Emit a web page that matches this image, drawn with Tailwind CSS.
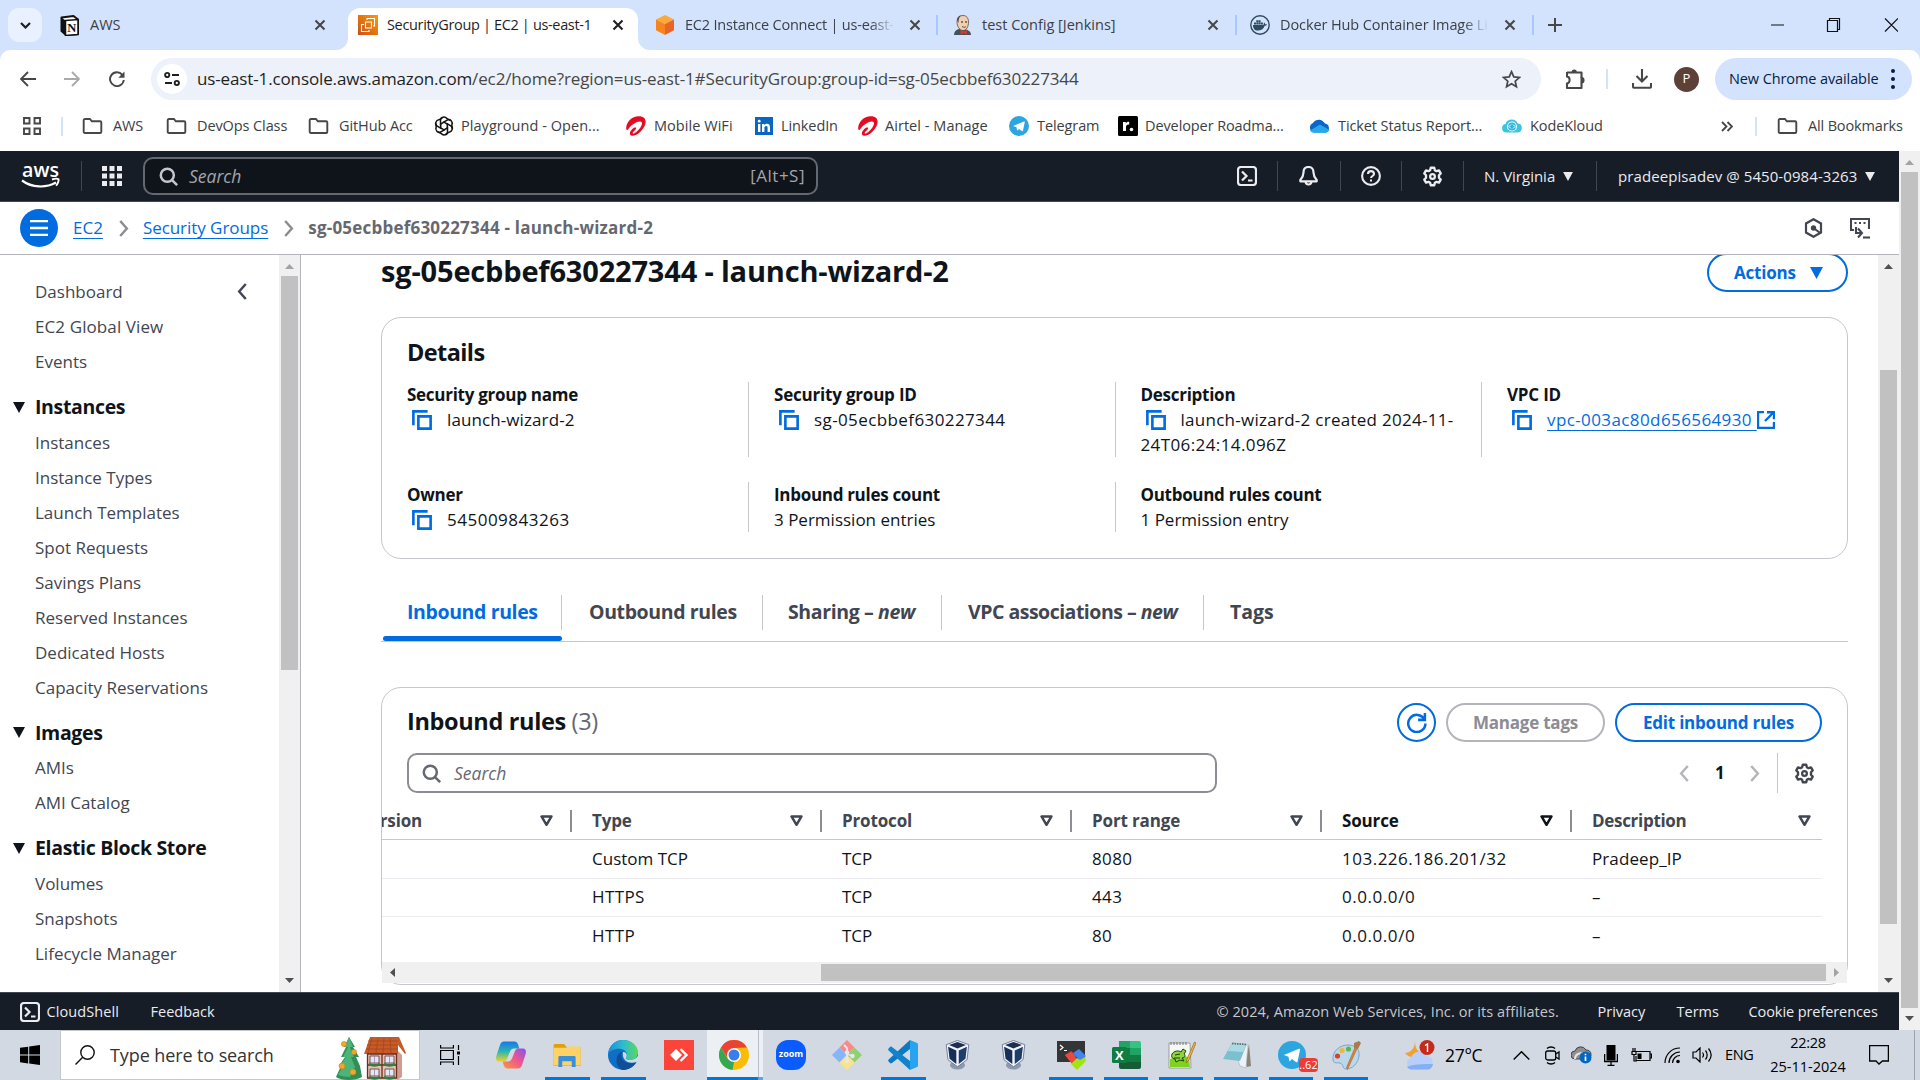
<!DOCTYPE html>
<html lang="en">
<head>
<meta charset="utf-8">
<title>SecurityGroup | EC2 | us-east-1</title>
<script src="https://cdn.jsdelivr.net/npm/@tailwindcss/browser@4"></script>
</head>
<body class="h-[1080px] w-[1920px] overflow-hidden bg-white font-['Open_Sans','Noto_Sans',sans-serif] text-[17px] text-[#0f141a]">

<!-- shared icons -->
<svg class="hidden">
  <symbol id="copy" viewBox="0 0 16 16"><path d="M14.900 5.100H5.100v9.800h9.800z M12.500 1.100H1.100v11" fill="none" stroke="currentColor" stroke-width="2.100"/></symbol>
  <symbol id="x" viewBox="0 0 12 12"><path d="M1.500 1.500l9 9M10.500 1.500l-9 9" stroke="currentColor" stroke-width="2.100"/></symbol>
  <symbol id="folder" viewBox="0 0 20 16"><path d="M1.200 2.300c0-.8.5-1.300 1.200-1.300h5l2 2.300h8.200c.7 0 1.200.5 1.200 1.200v9.200c0 .7-.5 1.300-1.200 1.300H2.400c-.7 0-1.200-.5-1.200-1.300z" fill="none" stroke="#474747" stroke-width="1.900"/></symbol>
  <symbol id="mag" viewBox="0 0 16 16"><circle cx="7" cy="7" r="5.500" fill="none" stroke="currentColor" stroke-width="2.100"/><path d="M11 11l4.300 4.300" stroke="currentColor" stroke-width="2.100"/></symbol>
  <symbol id="gear" viewBox="0 0 24 24"><path d="M10 2h4l.7 2.800 1.900 1.100 2.800-.8 2 3.400-2 2.100v2.800l2 2.100-2 3.400-2.800-.8-1.900 1.100L14 22h-4l-.7-2.800-1.900-1.100-2.800.8-2-3.400 2-2.100v-2.800l-2-2.100 2-3.400 2.800.8 1.900-1.100z" fill="none" stroke="currentColor" stroke-width="2.700" stroke-linejoin="round"/><circle cx="12" cy="12" r="2.700" fill="none" stroke="currentColor" stroke-width="2.600"/></symbol>
  <symbol id="shell" viewBox="0 0 20 20"><rect x="1" y="1" width="18" height="18" rx="3" fill="none" stroke="currentColor" stroke-width="2.200"/><path d="M5 5.500l4.500 4.500L5 14.500M11 14.500h4.500" fill="none" stroke="currentColor" stroke-width="2.200"/></symbol>
  <symbol id="filt" viewBox="0 0 12 11"><path d="M1.400 1.300h9.200L6 9z" fill="none" stroke="currentColor" stroke-width="2.300" stroke-linejoin="round"/></symbol>
  <symbol id="down" viewBox="0 0 12 11"><path d="M0 0h12L6 11z" fill="currentColor"/></symbol>
  <symbol id="chev" viewBox="0 0 10 18"><path d="M1 1l7 8-7 8" fill="none" stroke="currentColor" stroke-width="2.600"/></symbol>
  <symbol id="airtel" viewBox="0 0 20 20"><path d="M.2 12C.5 5.500 6 .6 12.500.3 17 .1 20 2.600 19.600 6.400c-.5 5-5.400 10.400-10 12.600-1.800.9-4.400 1.200-5.400-.2-1-1.500.4-4.200 2.300-6 1.300-1.200 2.900-1.700 3.500-1.200.5.500 0 1.600-1 2.700-1.200 1.300-2.600 2.400-2.300 3 .4.700 2.300-.1 4.200-1.800 2.800-2.500 5.400-6.300 5.100-8.400-.3-1.900-3-2-5.600-.8C7 7.900 4 10.600 2 13.500c-.9 1.200-1.900.3-1.800-1.500z" fill="#e60a22"/></symbol>
  <symbol id="telegram" viewBox="0 0 24 24"><circle cx="12" cy="12" r="12" fill="#2ca5e0"/><path d="M5 12l13-5.300c.8-.3 1 .2.900.9l-2.100 9.900c-.2.8-.8.900-1.400.5L12 15.500l-1.600 1.600c-.4.400-.7.300-.8-.3L9 13.500z" fill="#fff"/></symbol>
  <symbol id="vbox" viewBox="0 0 26 32"><ellipse cx="13" cy="27" rx="8" ry="4.500" fill="#8d97ad"/><path d="M13 .5l12 4.500-1.800 16L13 28.500 2.800 21 1 5z" fill="#f2f4f9" stroke="#5f6f8e" stroke-width=".9"/><path d="M13 2l9 3.200L13 9 4 5.200z" fill="#1d2f50"/><path d="M3 7.300l8.700 3.900v14.300L4.500 20z" fill="#16305a"/><path d="M23 7.300l-8.700 3.900v14.300l7.200-5.500z" fill="#1d3d6b"/></symbol>
</svg>

<!-- browser tab strip -->
<div class="flex h-[50px] items-center bg-[#d3e3fd] text-[14.5px] text-[#3c4043]">
  <div class="ml-2 flex h-[34px] w-[34px] items-center justify-center rounded-[11px] bg-[#e9f0fe]">
    <svg class="h-[7px] w-[11px]" viewBox="0 0 11 7"><path d="M1 1l4.500 4.500L10 1" fill="none" stroke="#1f1f1f" stroke-width="2.200"/></svg>
  </div>
  <div class="ml-[18px] flex w-[288px] items-center">
    <svg class="h-[21px] w-5" viewBox="0 0 20 21"><path d="M1.500 2.500l12-1.500 4.500 3.500V19L6 20l-4.500-4z" fill="#fff" stroke="#111" stroke-width="2" stroke-linejoin="round"/><path d="M5.500 5.500L18 4.500v15l-12.500 1z" fill="#fff" stroke="#111" stroke-width="1.500"/><path d="M1.500 2.500l4 3V20l-4-4z" fill="#111"/><text x="7.300" y="16.800" font-family="Liberation Serif" font-weight="bold" font-size="12.500" fill="#111">N</text></svg>
    <span class="ml-2.5 w-[224px]">AWS</span>
    <svg class="h-3 w-3 text-[#474747]"><use href="#x"/></svg>
  </div>
  <div class="relative flex h-[42px] w-[290px] self-end rounded-t-[12px] bg-white pl-2.5 text-[#1f1f1f]">
    <svg class="absolute -left-3 bottom-0 h-3 w-3" viewBox="0 0 12 12"><path d="M12 0v12H0A12 12 0 0 0 12 0z" fill="#fff"/></svg>
    <svg class="absolute -right-3 bottom-0 h-3 w-3" viewBox="0 0 12 12"><path d="M0 0v12h12A12 12 0 0 1 0 0z" fill="#fff"/></svg>
    <div class="flex h-[34px] items-center">
      <svg class="h-5 w-5" viewBox="0 0 20 20"><defs><linearGradient id="ora" x1="0" y1="1" x2="1" y2="0"><stop stop-color="#c8511b"/><stop offset="1" stop-color="#f90"/></linearGradient></defs><path d="M0 0h20v20H0z" fill="url(#ora)"/><path d="M7.500 7h6v6h-6zM9 5V3.500h7.500v7.500H15M6 9.500H3.500v7H11V15" fill="none" stroke="#fff" stroke-width="1.100"/></svg>
      <span class="ml-[9px] w-[225px] tracking-[-0.34px] whitespace-nowrap">SecurityGroup | EC2 | us-east-1</span>
      <svg class="h-3 w-3"><use href="#x"/></svg>
    </div>
  </div>
  <div class="ml-[18px] flex w-[282px] items-center">
    <svg class="h-5 w-[18px]" viewBox="0 0 18 20"><path d="M9 0l9 4.500L9 9 0 4.500z" fill="#fba93b"/><path d="M0 4.500L9 9v11l-9-4.800z" fill="#f68520"/><path d="M18 4.500L9 9v11l9-4.800z" fill="#ea6426"/></svg>
    <div class="ml-[11px] w-[210px] overflow-hidden mask-r-from-88% tracking-[-0.2px] whitespace-nowrap">EC2 Instance Connect | us-east-1</div>
    <svg class="ml-[14px] h-3 w-3 text-[#474747]"><use href="#x"/></svg>
    <div class="ml-auto h-5 w-0.5 bg-[#a8c7fa]"></div>
  </div>
  <div class="ml-[15px] flex w-[284px] items-center">
    <svg class="h-5 w-[19px]" viewBox="0 0 19 20"><path d="M1 20c0-3.500 2-5 5-6h6c3 1 6 2.500 6 6z" fill="#45525c"/><path d="M4 7c0-4 2.500-6.500 6-6.500S15.500 3 15.500 7c0 4.500-2 8.500-5.500 8.500S4 11 4 7z" fill="#efd0b0" stroke="#5d4c3c" stroke-width=".8"/><path d="M4 5C4 2 6 .5 8 .5 6 2 5.500 5 5.500 8z" fill="#574a40"/><circle cx="9" cy="7" r=".8"/><circle cx="13" cy="7" r=".8"/><path d="M9 11.500c1.500 1 3 1 4 0" stroke="#653" fill="none"/><path d="M7.500 15l3 1.500 3.500-1.500v4.500l-3.500-1.500-3 1.500z" fill="#d33833"/></svg>
    <span class="ml-2.5 w-[225px] whitespace-nowrap">test Config [Jenkins]</span>
    <svg class="h-3 w-3 text-[#474747]"><use href="#x"/></svg>
    <div class="ml-auto h-5 w-0.5 bg-[#a8c7fa]"></div>
  </div>
  <div class="ml-[13px] flex w-[284px] items-center">
    <svg class="h-5 w-5" viewBox="0 0 20 20"><circle cx="10" cy="10" r="9.200" fill="none" stroke="#2e4a5d" stroke-width="1.400"/><path d="M3 10h10.500c.3-1 .2-2 .8-2.600.7.600.9 1.200.9 1.800.7-.1 1.400 0 1.800.3-.5.900-1.300 1.200-2.300 1.200C13.500 14 11 15.500 7.800 15.500 4.500 15.500 3 13.500 3 10zM4 7.500h2v2H4zM6.300 7.500h2v2h-2zM8.600 7.500h2v2h-2zM10.900 7.500h2v2h-2zM6.300 5.200h2v2h-2zM8.600 5.200h2v2h-2z" fill="#2e4a5d"/></svg>
    <div class="ml-2.5 w-[209px] overflow-hidden mask-r-from-88% tracking-[-0.1px] whitespace-nowrap">Docker Hub Container Image Library</div>
    <svg class="ml-[15px] h-3 w-3 text-[#474747]"><use href="#x"/></svg>
    <div class="ml-auto h-5 w-0.5 bg-[#a8c7fa]"></div>
  </div>
  <svg class="ml-[14px] h-[14px] w-[14px]" viewBox="0 0 14 14"><path d="M7 0v14M0 7h14" stroke="#474747" stroke-width="2"/></svg>
  <svg class="mr-[22px] ml-auto h-[14px] w-[127px]" viewBox="0 0 127 14"><path d="M0 7h13M56.500 2.500h10v11h-10zM58.500 2.500v-2h10v11h-2M114 .5l13 13M127 .5l-13 13" fill="none" stroke="#111" stroke-width="1.200"/></svg>
</div>

<!-- address bar -->
<div class="bg-[#d3e3fd]"><div class="flex h-[58px] items-center rounded-t-[10px] bg-white">
  <svg class="ml-5 h-4 w-4" viewBox="0 0 16 16"><path d="M8 1L1 8l7 7M1 8h15" fill="none" stroke="#474747" stroke-width="1.900"/></svg>
  <svg class="ml-[28px] h-4 w-4" viewBox="0 0 16 16"><path d="M8 1l7 7-7 7M15 8H0" fill="none" stroke="#a9a9a9" stroke-width="1.900"/></svg>
  <svg class="ml-[29px] h-4 w-4" viewBox="0 0 16 16"><path d="M13.300 3.800A6.900 6.900 0 1 0 14.800 9" fill="none" stroke="#474747" stroke-width="1.900"/><path d="M15.500.5v6.200H9.300z" fill="#474747"/></svg>
  <div class="ml-[26px] flex h-[42px] w-[1390px] items-center rounded-full bg-[#ecf1fa] pl-1.5">
    <div class="flex h-[30px] w-[30px] items-center justify-center rounded-full bg-white">
      <svg class="h-4 w-4" viewBox="0 0 16 16"><g fill="none" stroke="#1f1f1f" stroke-width="1.900"><circle cx="3.200" cy="4" r="2.100"/><circle cx="12.800" cy="12" r="2.100"/><path d="M8 4h7M1 12h7"/></g></svg>
    </div>
    <span class="ml-[10px] tracking-[-0.13px] whitespace-nowrap text-[#474747]"><span class="text-[#1f1f1f]">us-east-1.console.aws.amazon.com</span>/ec2/home?region=us-east-1#SecurityGroup:group-id=sg-05ecbbef630227344</span>
    <svg class="mr-5 ml-auto h-[19px] w-[19px]" viewBox="0 0 20 20"><path d="M10 1.800l2.400 5.500 6 .5-4.500 4 1.300 5.800-5.200-3.100-5.200 3.100 1.300-5.800-4.500-4 6-.5z" fill="none" stroke="#474747" stroke-width="1.800"/></svg>
  </div>
  <svg class="ml-[24px] h-[22px] w-[21px]" viewBox="0 0 21 22"><path d="M2 4.500h14.500v5.300M16.500 14.500V20H2v-5" fill="none" stroke="#474747" stroke-width="2.100" stroke-linejoin="round"/><path d="M2 4v4.500c3.500.5 3.500 6.500 0 7V20" fill="none" stroke="#474747" stroke-width="2"/><path d="M6.500 4.500a2.700 2.900 0 0 1 5.400 0zM16.500 9v6.500a3 3.200 0 0 0 0-6.500z" fill="#474747"/><path d="M16.500 9v6" stroke="#474747" stroke-width="2"/></svg>
  <div class="ml-[20px] h-5 w-0.5 bg-[#d3e3fd]"></div>
  <svg class="ml-[24px] h-5 w-5" viewBox="0 0 20 20"><path d="M10 0v12M4.500 7l5.500 5.500L15.500 7M1 14v3.500c0 .8.600 1.300 1.300 1.300h15.400c.7 0 1.300-.5 1.300-1.300V14" fill="none" stroke="#474747" stroke-width="2.100"/></svg>
  <div class="ml-[22px] flex h-[25px] w-[25px] items-center justify-center rounded-full bg-[#5d4037] text-[13px] text-white">P</div>
  <div class="ml-[16px] flex h-[42px] w-[197px] items-center rounded-full bg-[#d3e3fd] pl-[14px] text-[14.5px] text-[#041e49]">
    <span class="w-[162px] tracking-[-0.1px] whitespace-nowrap">New Chrome available</span>
    <svg class="h-[20px] w-1" viewBox="0 0 4 20"><g fill="#041e49"><circle cx="2" cy="2" r="2"/><circle cx="2" cy="10" r="2"/><circle cx="2" cy="18" r="2"/></g></svg>
  </div>
</div></div>

<!-- bookmarks bar -->
<div class="flex h-[43px] items-center pb-[7px] text-[14.5px] tracking-[-0.1px] whitespace-nowrap text-[#3c4043]">
  <svg class="ml-[23px] h-[18px] w-[18px]" viewBox="0 0 18 18"><path d="M1 1h5.500v5.500H1zM11.500 1H17v5.500h-5.500zM1 11.500h5.500V17H1zM11.500 11.500H17V17h-5.500z" fill="none" stroke="#474747" stroke-width="1.900"/></svg>
  <div class="mr-[19px] ml-[20px] h-[19px] w-0.5 bg-[#d3e3fd]"></div>
  <div class="flex w-[84px] items-center gap-[10px]"><svg class="h-4 w-[21px]"><use href="#folder"/></svg>AWS</div>
  <div class="flex w-[142px] items-center gap-[10px]"><svg class="h-4 w-[21px]"><use href="#folder"/></svg>DevOps Class</div>
  <div class="flex w-[126px] items-center gap-[10px]"><svg class="h-4 w-[21px]"><use href="#folder"/></svg>GitHub Acc</div>
  <div class="flex w-[192px] items-center gap-[7px] tracking-[0.05px]"><svg class="h-5 w-5" viewBox="0 0 20 20"><g fill="none" stroke="#111" stroke-width="1.500"><path d="M10 6.200L6.500 8.200V3.800C6.500 1 11 0 12.800 2.500L16 4.400"/><path d="M10 6.200L6.500 8.200V3.800C6.500 1 11 0 12.800 2.500L16 4.400" transform="rotate(60 10 10)"/><path d="M10 6.200L6.500 8.200V3.800C6.500 1 11 0 12.800 2.500L16 4.400" transform="rotate(120 10 10)"/><path d="M10 6.200L6.500 8.200V3.800C6.500 1 11 0 12.800 2.500L16 4.400" transform="rotate(180 10 10)"/><path d="M10 6.200L6.500 8.200V3.800C6.500 1 11 0 12.800 2.500L16 4.400" transform="rotate(240 10 10)"/><path d="M10 6.200L6.500 8.200V3.800C6.500 1 11 0 12.800 2.500L16 4.400" transform="rotate(300 10 10)"/></g></svg>Playground - Open...</div>
  <div class="flex w-[129px] items-center gap-[8px] tracking-[0.05px]"><svg class="h-5 w-5"><use href="#airtel"/></svg>Mobile WiFi</div>
  <div class="flex w-[103px] items-center gap-[8px]"><svg class="h-[18px] w-[18px]" viewBox="0 0 18 18"><path d="M0 0h18v18H0z" fill="#0a66c2"/><path d="M3 7h2.400v8H3zM7 7h2.300v1.200C10 7.200 11 6.800 12 6.800c2.400 0 3 1.500 3 3.700V15h-2.400v-4c0-1.200-.2-2.100-1.500-2.100S9.400 9.900 9.400 11v4H7z" fill="#fff"/><circle cx="4.200" cy="4.200" r="1.400" fill="#fff"/></svg>LinkedIn</div>
  <div class="flex w-[151px] items-center gap-[7px] tracking-[0.05px]"><svg class="h-5 w-5"><use href="#airtel"/></svg>Airtel - Manage</div>
  <div class="flex w-[109px] items-center gap-[8px]"><svg class="h-5 w-5"><use href="#telegram"/></svg>Telegram</div>
  <div class="flex w-[191px] items-center gap-[7px]"><svg class="h-5 w-5" viewBox="0 0 20 20"><rect width="20" height="20" rx="1.500"/><path d="M5 6h2.800v1.500C8.500 6.200 9.700 5.700 11.200 5.900v2.700C9 8.400 8 9.400 8 11v4H5z" fill="#fff"/><circle cx="13.500" cy="13.500" r="1.800" fill="#fff"/></svg>Developer Roadma...</div>
  <div class="flex w-[193px] items-center gap-[8px]"><svg class="h-[14px] w-[21px]" viewBox="0 0 21 14"><path d="M5 13.500A5 5 0 0 1 4 4 7 7 0 0 1 16 4.500a4.700 4.700 0 0 1 1 9z" fill="#0a66c8"/><path d="M1 11.500L11 5.500l9.500 5.500a4.500 4.500 0 0 1-3.500 2.700H5a4.500 4.500 0 0 1-4-2.200z" fill="#28a8ea"/></svg>Ticket Status Report...</div>
  <div class="flex items-center gap-[8px]"><svg class="h-[14px] w-5" viewBox="0 0 20 14"><path d="M4.500 13.500A4.300 4.300 0 0 1 3.500 5 6.500 6.500 0 0 1 15.500 4.200a4.700 4.700 0 0 1 .5 9.300z" fill="#38c6dc"/><circle cx="10" cy="7.500" r="4.500" fill="#2bb5e0" stroke="#e8fbff" stroke-width="1.200"/><path d="M9 5.500l-2 2 2 2M11 5.500l2 2-2 2" fill="none" stroke="#fff"/></svg>KodeKloud</div>
  <svg class="ml-auto h-[11px] w-3" viewBox="0 0 12 11"><path d="M1 1l4.500 4.500L1 10M6.500 1L11 5.500 6.500 10" fill="none" stroke="#474747" stroke-width="1.800"/></svg>
  <div class="mr-[20px] ml-[22px] h-[19px] w-0.5 bg-[#d3e3fd]"></div>
  <div class="flex w-[143px] items-center gap-[10px] tracking-[-0.15px]"><svg class="h-4 w-[21px]"><use href="#folder"/></svg>All Bookmarks</div>
</div>

<!-- web page -->
<div class="flex h-[879px]">
  <div class="flex w-[1899px] flex-col">

    <!-- console header -->
    <header class="flex h-[51px] items-center border-b border-[#424650] bg-[#161d26] text-[15px] font-medium text-[#ebebf0]">
      <svg class="ml-[21px] h-[29px] w-[39px] overflow-visible" viewBox="0 0 39 29"><text x="1" y="14.500" font-family="Open Sans" font-weight="600" font-size="19.500" textLength="37" lengthAdjust="spacingAndGlyphs" fill="#fff">aws</text><path d="M1 18.500c10 7.500 24 7.700 34 2" fill="none" stroke="#fff" stroke-width="2.200"/><path d="M31 17.500c3-1 5.500-1 6.500-.3.500 1.500-.8 4.800-2.500 6.500" fill="none" stroke="#fff" stroke-width="1.900"/></svg>
      <div class="ml-[21px] h-[30px] w-px bg-[#424650]"></div>
      <svg class="ml-[20px] h-5 w-5" viewBox="0 0 20 20"><path d="M0 0h5v5H0zM7.500 0h5v5h-5zM15 0h5v5h-5zM0 7.500h5v5H0zM7.500 7.500h5v5h-5zM15 7.500h5v5h-5zM0 15h5v5H0zM7.500 15h5v5h-5zM15 15h5v5h-5z" fill="#ebebf0"/></svg>
      <div class="ml-[21px] flex h-[38px] w-[675px] items-center rounded-[10px] border-2 border-[#656871] bg-[#0f141a] pr-[11px] pl-[14px] text-[17px] font-normal text-[#a4a4ad]">
        <svg class="h-[19px] w-[19px] text-[#c6c6cd]"><use href="#mag"/></svg>
        <span class="ml-[11px] text-[17.500px] italic">Search</span>
        <span class="ml-auto tracking-[0.5px]">[Alt+S]</span>
      </div>
      <div class="ml-auto flex items-center">
        <div class="flex h-[30px] w-[61px] items-center justify-center border-r border-[#424650]"><svg class="h-5 w-5"><use href="#shell"/></svg></div>
        <div class="flex h-[30px] w-[63px] items-center justify-center border-r border-[#424650] pr-[2px]"><svg class="h-5 w-[19px]" viewBox="0 0 19 20"><path d="M9.500 1c-4 0-5 3-5 5.500 0 3.500-1 5-3.200 7.500v1.300h16.400V14c-2.200-2.500-3.200-4-3.200-7.500 0-2.500-1-5.500-5-5.500zM6.500 15.500c.3 4 5.700 4 6 0" fill="none" stroke="currentColor" stroke-width="2.200" stroke-linejoin="round"/></svg></div>
        <div class="flex h-[30px] w-[61px] items-center justify-center border-r border-[#424650]"><svg class="h-5 w-5" viewBox="0 0 20 20"><circle cx="10" cy="10" r="8.900" fill="none" stroke="currentColor" stroke-width="2.100"/><path d="M7 8c0-3.800 6-3.800 6 0 0 2-3 2-3 4" fill="none" stroke="currentColor" stroke-width="2.100"/><path d="M9 13.500h2v2H9z" fill="currentColor"/></svg></div>
        <div class="flex h-[30px] w-[62px] items-center justify-center border-r border-[#424650]"><svg class="h-[21px] w-[21px]"><use href="#gear"/></svg></div>
        <div class="flex h-[30px] w-[133px] items-center border-r border-[#424650] pl-[20px] whitespace-nowrap">N. Virginia<svg class="ml-[8px] h-[9px] w-[10px]"><use href="#down"/></svg></div>
        <div class="flex w-[302px] items-center pl-[21px] tracking-[0.08px] whitespace-nowrap">pradeepisadev @ 5450-0984-3263<svg class="ml-[8px] h-[9px] w-[10px]"><use href="#down"/></svg></div>
      </div>
    </header>

    <!-- breadcrumb -->
    <div class="flex h-[53px] items-center border-b border-[#b4b4bb] whitespace-nowrap">
      <div class="ml-5 flex h-[38px] w-[38px] items-center justify-center rounded-full bg-[#006ce0]"><svg class="h-4 w-[18px]" viewBox="0 0 18 16"><path d="M0 1.200h18M0 8h18M0 14.800h18" stroke="#fff" stroke-width="2.300"/></svg></div>
      <span class="ml-[15px] text-[#006ce0] underline underline-offset-[4px]">EC2</span>
      <svg class="ml-[16px] h-[17px] w-2.5 text-[#8c8c94]"><use href="#chev"/></svg>
      <span class="ml-[14px] tracking-[-0.05px] text-[#006ce0] underline underline-offset-[4px]">Security Groups</span>
      <svg class="ml-[16px] h-[17px] w-2.5 text-[#8c8c94]"><use href="#chev"/></svg>
      <span class="ml-[14px] font-bold tracking-[0.21px] text-[#656871]">sg-05ecbbef630227344 - launch-wizard-2</span>
      <svg class="ml-auto h-5 w-[19px] text-[#424650]" viewBox="0 0 19 20"><path d="M9.500 1.200l7.500 4.300v9l-7.500 4.300L2 14.500v-9z" fill="none" stroke="currentColor" stroke-width="2.200"/><circle cx="9.500" cy="10" r="2.700" fill="currentColor"/><path d="M9.500 10l6 4.500" stroke="currentColor" stroke-width="2.100"/></svg>
      <svg class="mr-[29px] ml-[27px] h-[21px] w-5 text-[#424650]" viewBox="0 0 20 21"><path d="M4 12H1V1h18v10" fill="none" stroke="currentColor" stroke-width="2.100"/><path d="M4.500 5h2M9 5h2M13.500 5h2" stroke="currentColor" stroke-width="2"/><path d="M6 9v6h5M8 10.500l4 4.500-4 4.500" fill="none" stroke="currentColor" stroke-width="2.100"/><path d="M13 19.500h7" stroke="currentColor" stroke-width="2.100"/></svg>
    </div>

    <div class="flex h-[737px] overflow-hidden">
      <!-- side navigation -->
      <nav class="w-[279px] overflow-hidden pt-[24px] text-[#424650]">
        <div class="flex flex-col gap-2.5 pl-[35px] leading-[25px]">
          <div class="flex items-center justify-between pr-[32px]">Dashboard<svg class="h-[17px] w-2.5 -scale-x-100"><use href="#chev"/></svg></div>
          <div class="tracking-[0.1px]">EC2 Global View</div>
          <div>Events</div>
        </div>
        <h3 class="mt-5 flex h-[26px] items-center text-[19.500px] font-bold tracking-[-0.34px] text-[#0f141a]"><svg class="mr-[10px] ml-[13px] h-[11px] w-3"><use href="#down"/></svg>Instances</h3>
        <div class="mt-2.5 flex flex-col gap-2.5 pl-[35px] leading-[25px]">
          <div>Instances</div><div>Instance Types</div><div>Launch Templates</div><div>Spot Requests</div><div>Savings Plans</div><div>Reserved Instances</div><div>Dedicated Hosts</div><div>Capacity Reservations</div>
        </div>
        <h3 class="mt-5 flex h-[25px] items-center text-[19.500px] font-bold tracking-[-0.34px] text-[#0f141a]"><svg class="mr-[10px] ml-[13px] h-[11px] w-3"><use href="#down"/></svg>Images</h3>
        <div class="mt-2.5 flex flex-col gap-2.5 pl-[35px] leading-[25px]"><div>AMIs</div><div>AMI Catalog</div></div>
        <h3 class="mt-5 flex h-[26px] items-center text-[19.500px] font-bold tracking-[-0.34px] text-[#0f141a]"><svg class="mr-[10px] ml-[13px] h-[11px] w-3"><use href="#down"/></svg>Elastic Block Store</h3>
        <div class="mt-2.5 flex flex-col gap-2.5 pl-[35px] leading-[25px]"><div>Volumes</div><div>Snapshots</div><div>Lifecycle Manager</div></div>
        <h3 class="mt-[21px] flex h-[26px] items-center pl-[35px] text-[19.500px] font-bold tracking-[-0.34px] text-[#0f141a]">Network &amp; Security</h3>
      </nav>
      <div class="flex w-[22px] shrink-0 flex-col items-center border-r border-[#b4b4bb] bg-[#f0f0f0]">
        <svg class="mt-[9px] h-[5px] w-[9px]" viewBox="0 0 9 5"><path d="M0 5h9L4.500 0z" fill="#a3a3a3"/></svg>
        <div class="mt-[7px] h-[394px] w-[17px] bg-[#c1c1c1]"></div>
        <svg class="mt-auto mb-[9px] h-[5px] w-[9px]" viewBox="0 0 9 5"><path d="M0 0h9L4.500 5z" fill="#505050"/></svg>
      </div>

      <!-- main content -->
      <main class="h-full w-[1577px] overflow-hidden pr-[30px] pl-[80px]">
        <div class="-mt-[2px] flex h-[39px] items-center justify-between">
          <h1 class="pb-[3px] text-[29px] font-bold tracking-[-0.18px] whitespace-nowrap">sg-05ecbbef630227344 - launch-wizard-2</h1>
          <div class="flex h-[39px] w-[141px] items-center rounded-full border-[2.500px] border-[#006ce0] pl-[25px] font-bold tracking-[-0.2px] text-[#006ce0]">Actions<svg class="ml-[14px] h-[12px] w-[13px]"><use href="#down"/></svg></div>
        </div>

        <section class="mt-[25px] h-[242px] rounded-[20px] border border-[#c6c6cd] px-[25px] pt-[20px]">
          <h2 class="h-[30px] text-[23.500px] leading-[28px] font-bold tracking-[-0.6px]">Details</h2>
          <div class="mt-[14px] grid grid-cols-[341px_366.500px_366.500px_1fr] gap-y-[25px] leading-[25px] whitespace-nowrap">
            <div class="h-[75px]"><div class="font-bold tracking-[-0.27px]">Security group name</div><div class="flex items-center tracking-[0.1px]"><svg class="mr-[15px] ml-[5px] h-5 w-5 text-[#006ce0]"><use href="#copy"/></svg>launch-wizard-2</div></div>
            <div class="border-l border-[#c6c6cd] pl-[25px]"><div class="font-bold tracking-[-0.2px]">Security group ID</div><div class="flex items-center tracking-[0.4px]"><svg class="mr-[15px] ml-[5px] h-5 w-5 text-[#006ce0]"><use href="#copy"/></svg>sg-05ecbbef630227344</div></div>
            <div class="border-l border-[#c6c6cd] pl-[25px]"><div class="font-bold tracking-[-0.27px]">Description</div><div class="flex items-center tracking-[0.27px]"><svg class="mr-[15px] ml-[5px] h-5 w-5 text-[#006ce0]"><use href="#copy"/></svg>launch-wizard-2 created 2024-11-</div><div class="tracking-[0.4px]">24T06:24:14.096Z</div></div>
            <div class="border-l border-[#c6c6cd] pl-[25px]"><div class="font-bold tracking-[-0.2px]">VPC ID</div><div class="flex items-center text-[#006ce0]"><svg class="mr-[15px] ml-[5px] h-5 w-5"><use href="#copy"/></svg><span class="tracking-[0.4px] underline underline-offset-[4px]">vpc-003ac80d656564930&nbsp;</span><svg class="h-[18px] w-[18px]" viewBox="0 0 18 18"><path d="M7 1H1v16h16v-6M10 1.200h7v7M16.500 1.500L8 10" fill="none" stroke="currentColor" stroke-width="2.400"/></svg></div></div>
            <div class="h-[50px]"><div class="font-bold tracking-[-0.27px]">Owner</div><div class="flex items-center tracking-[0.5px]"><svg class="mr-[15px] ml-[5px] h-5 w-5 text-[#006ce0]"><use href="#copy"/></svg>545009843263</div></div>
            <div class="border-l border-[#c6c6cd] pl-[25px]"><div class="font-bold tracking-[-0.3px]">Inbound rules count</div><div>3 Permission entries</div></div>
            <div class="border-l border-[#c6c6cd] pl-[25px]"><div class="font-bold tracking-[-0.3px]">Outbound rules count</div><div>1 Permission entry</div></div>
          </div>
        </section>

        <!-- tabs -->
        <div class="mt-[23px] flex h-[60px] border-b border-[#c6c6cd] text-[19.500px] font-bold tracking-[-0.38px] whitespace-nowrap text-[#424650]">
          <div class="flex w-[181px] flex-col justify-between pl-[2px] text-[#006ce0]"><div class="mt-[13px] flex h-[35px] items-center border-r border-[#c6c6cd] pb-[2px] pl-[24px]">Inbound rules</div><div class="h-[5px] rounded-full bg-[#006ce0]"></div></div>
          <div class="mt-[13px] flex h-[35px] w-[201px] items-center border-r border-[#c6c6cd] pb-[2px] pl-[27px]">Outbound rules</div>
          <div class="mt-[13px] flex h-[35px] w-[179px] items-center border-r border-[#c6c6cd] pb-[2px] pl-[25px]">Sharing –&nbsp;<i>new</i></div>
          <div class="mt-[13px] flex h-[35px] w-[262px] items-center border-r border-[#c6c6cd] pb-[2px] pl-[26px] tracking-[-0.5px]">VPC associations –&nbsp;<i>new</i></div>
          <div class="mt-[13px] flex h-[35px] items-center pb-[2px] pl-[26px] tracking-normal">Tags</div>
        </div>

        <!-- rules table -->
        <section class="mt-[45px] h-[298px] rounded-[20px] border border-[#c6c6cd] pt-[15px]">
          <div class="flex h-[39px] items-center pr-[25px] pl-[25px] font-bold tracking-[-0.22px]">
            <h2 class="pb-[2px] text-[23.500px] font-bold tracking-[-0.35px]">Inbound rules <span class="font-normal text-[#656871]">(3)</span></h2>
            <div class="ml-auto flex h-[39px] w-[39px] items-center justify-center rounded-full border-[2.500px] border-[#006ce0] text-[#006ce0]"><svg class="h-[21px] w-[21px]" viewBox="0 0 20 20"><path d="M17.500 7A8.200 8.200 0 1 0 18.500 11M18 1v6.500h-6.500" fill="none" stroke="currentColor" stroke-width="2.400"/></svg></div>
            <div class="ml-2.5 flex h-[39px] w-[159px] items-center justify-center rounded-full border-[2.500px] border-[#b4b4bb] text-[#8c8c94]">Manage tags</div>
            <div class="ml-2.5 flex h-[39px] w-[207px] items-center justify-center rounded-full border-[2.500px] border-[#006ce0] text-[#006ce0]">Edit inbound rules</div>
          </div>
          <div class="mt-[11px] flex h-10 items-center pl-[25px]">
            <div class="flex h-10 w-[810px] items-center rounded-[10px] border-2 border-[#8c8c94] pl-[13px] text-[#656871]"><svg class="h-[19px] w-[19px]"><use href="#mag"/></svg><span class="ml-[13px] text-[17.500px] italic">Search</span></div>
            <svg class="ml-[462px] h-[17px] w-2.5 -scale-x-100 text-[#b4b4bb]"><use href="#chev"/></svg>
            <span class="ml-[26px] w-[10px] font-bold">1</span>
            <svg class="ml-[25px] h-[17px] w-2.5 text-[#b4b4bb]"><use href="#chev"/></svg>
            <div class="ml-[17px] h-10 w-px bg-[#c6c6cd]"></div>
            <svg class="ml-[16px] h-[21px] w-[21px] text-[#424650]"><use href="#gear"/></svg>
          </div>
          <div class="relative mt-[8px] mr-[25px] overflow-hidden whitespace-nowrap">
            <div class="flex h-[39px] items-center border-b border-[#c6c6cd] pt-[2px] font-bold tracking-[-0.15px] text-[#424650]">
              <div class="flex h-[22px] w-[190px] items-center justify-between border-r-2 border-[#8c8c94] pr-[17px]"><span class="-ml-[23px]">Version</span><svg class="h-[12px] w-[13px]"><use href="#filt"/></svg></div>
              <div class="flex h-[22px] w-[250px] items-center justify-between border-r-2 border-[#8c8c94] pr-[17px] pl-5">Type<svg class="h-[12px] w-[13px]"><use href="#filt"/></svg></div>
              <div class="flex h-[22px] w-[250px] items-center justify-between border-r-2 border-[#8c8c94] pr-[17px] pl-5">Protocol<svg class="h-[12px] w-[13px]"><use href="#filt"/></svg></div>
              <div class="flex h-[22px] w-[250px] items-center justify-between border-r-2 border-[#8c8c94] pr-[17px] pl-5">Port range<svg class="h-[12px] w-[13px]"><use href="#filt"/></svg></div>
              <div class="flex h-[22px] w-[250px] items-center justify-between border-r-2 border-[#8c8c94] pr-[17px] pl-5"><span class="text-[#0f141a]">Source</span><svg class="h-[12px] w-[13px] text-[#0f141a]"><use href="#filt"/></svg></div>
              <div class="flex h-[22px] w-[250px] items-center justify-between pr-[11px] pl-5 tracking-[-0.3px]">Description<svg class="h-[12px] w-[13px]"><use href="#filt"/></svg></div>
            </div>
            <div class="grid h-[38.500px] grid-cols-[210px_250px_250px_250px_250px_1fr] items-center border-b border-[#ebebf0]"><span></span><span>Custom TCP</span><span>TCP</span><span class="tracking-[0.4px]">8080</span><span class="tracking-[0.5px]">103.226.186.201/32</span><span class="tracking-[0.1px]">Pradeep_IP</span></div>
            <div class="grid h-[38px] grid-cols-[210px_250px_250px_250px_250px_1fr] items-center border-b border-[#ebebf0]"><span></span><span class="tracking-[0.4px]">HTTPS</span><span>TCP</span><span class="tracking-[0.4px]">443</span><span class="tracking-[0.55px]">0.0.0.0/0</span><span>–</span></div>
            <div class="grid h-[37.500px] grid-cols-[210px_250px_250px_250px_250px_1fr] items-center"><span></span><span class="tracking-[0.4px]">HTTP</span><span>TCP</span><span class="tracking-[0.4px]">80</span><span class="tracking-[0.55px]">0.0.0.0/0</span><span>–</span></div>
          </div>
          <div class="mt-[8px] flex h-[21px] items-center bg-[#f0f0f0]">
            <svg class="ml-[8px] h-[9px] w-[5px]" viewBox="0 0 5 9"><path d="M5 0v9L0 4.500z" fill="#505050"/></svg>
            <div class="ml-[426px] h-[17px] w-[1005px] bg-[#c1c1c1]"></div>
            <svg class="ml-[8px] h-[9px] w-[5px]" viewBox="0 0 5 9"><path d="M0 0v9l5-4.500z" fill="#a3a3a3"/></svg>
          </div>
        </section>
      </main>
      <div class="flex w-[21px] shrink-0 flex-col items-center bg-[#f0f0f0]">
        <svg class="mt-[9px] h-[5px] w-[9px]" viewBox="0 0 9 5"><path d="M0 5h9L4.500 0z" fill="#505050"/></svg>
        <div class="mt-[101px] h-[554px] w-[17px] bg-[#c1c1c1]"></div>
        <svg class="mt-auto mb-[9px] h-[5px] w-[9px]" viewBox="0 0 9 5"><path d="M0 0h9L4.500 5z" fill="#505050"/></svg>
      </div>
    </div>

    <!-- console footer -->
    <footer class="flex h-[38px] items-center border-t border-[#424650] bg-[#161d26] text-[14.500px] font-medium whitespace-nowrap text-[#ebebf0]">
      <svg class="ml-5 h-5 w-5"><use href="#shell"/></svg>
      <span class="ml-[6.500px] w-[104px] tracking-[0.1px]">CloudShell</span>
      <span class="w-[1066px]">Feedback</span>
      <span class="w-[381px] font-normal tracking-[0.08px] text-[#c6c6cd]">© 2024, Amazon Web Services, Inc. or its affiliates.</span>
      <span class="w-[79px]">Privacy</span>
      <span class="w-[72px]">Terms</span>
      <span class="tracking-[-0.08px]">Cookie preferences</span>
    </footer>
  </div>
  <div class="flex w-[21px] flex-col items-center bg-[#f0f0f0]">
    <svg class="mt-[9px] h-[5px] w-[9px]" viewBox="0 0 9 5"><path d="M0 5h9L4.500 0z" fill="#a3a3a3"/></svg>
    <div class="mt-[7px] h-[836px] w-[17px] bg-[#c1c1c1]"></div>
    <svg class="mt-auto mb-[9px] h-[5px] w-[9px]" viewBox="0 0 9 5"><path d="M0 0h9L4.500 5z" fill="#505050"/></svg>
  </div>
</div>

<!-- desktop taskbar -->
<div class="flex h-[50px] items-center bg-[#d2d9e2] text-black">
  <svg class="ml-5 h-5 w-5" viewBox="0 0 20 20"><path d="M0 2.800l8.200-1.100v7.900H0zM9.200 1.500L20 0v9.600H9.200zM0 10.500h8.200v7.900L0 17.300zM9.200 10.500H20V20L9.200 18.500z"/></svg>
  <div class="ml-5 flex h-full w-[360px] items-center border border-[#c3c8ce] bg-white pl-[14px]">
    <svg class="h-5 w-5" viewBox="0 0 20 20"><circle cx="12.500" cy="7.500" r="6.700" fill="none" stroke="#111" stroke-width="1.400"/><path d="M7.700 12.300L.5 19.500" stroke="#111" stroke-width="1.400"/></svg>
    <span class="ml-[15px] w-[225px] text-[18px] tracking-[-0.1px] whitespace-nowrap text-[#333]">Type here to search</span>
    <svg class="mt-[5px] h-[44px] w-[72px]" viewBox="0 0 72 44"><path d="M14 1l6 10h-2l6 10h-3l4 9 2 11c-6 4-21 4-26 0l5-11H4l6-9H6l5-10H9z" fill="#2f8f55"/><path d="M14 1l4 10h-3l4 10h-3l4 10-5 10c-4 0-9-1-12-2l5-9H5l6-9H8l5-10h-3z" fill="#4cb478"/><g fill="#f2a62a" stroke="#c67a14" stroke-width=".5"><circle cx="9" cy="8" r="2.600"/><circle cx="19" cy="16" r="2.600"/><circle cx="7" cy="30" r="3"/><circle cx="18" cy="36" r="3"/></g><path d="M32 18h30v26H32z" fill="#e6c0b0"/><path d="M62 14l5 5v22l-5 3z" fill="#cf9d90"/><path d="M35 1h29l7 16-1 1-7-9 0 9H29z" fill="#c65a28"/><path d="M37 2l-4 15M43 2l-2 15M49 2l-1 15M55 2l1 15M32 9h30M33 5h30M31 13h32" stroke="#a5461d" stroke-width=".8" fill="none"/><path d="M32 18h30M32 29h30M32 42h30M32.500 18v24M47 18v24M61.500 18v24" stroke="#6b2c22" stroke-width="1.300"/><path d="M35 20h9v7h-9zM50 20h9v7h-9zM35 33h9v7h-9zM50 33h9v7h-9z" fill="#dfe8fb" stroke="#6b2c22" stroke-width=".8"/><path d="M39.500 20v7M54.500 20v7M39.500 33v7M54.500 33v7" stroke="#8d7ab0" stroke-width=".7"/><path d="M34 27.500c3 3 8 3 11 0M49 27.500c3 3 8 3 11 0M34 40.500c3 3 8 3 11 0M49 40.500c3 3 8 3 11 0" fill="none" stroke="#1c8a47" stroke-width="1.800"/></svg>
  </div>
  <svg class="ml-[20px] h-5 w-5" viewBox="0 0 20 20"><path d="M.6 0v3h12.800V0M.6 20v-3h12.800v3M.6 5.500h12.800v9H.6zM18.500 0v5M18.500 11v9" fill="none" stroke="#000" stroke-width="1.200"/><path d="M17 6.500h3v3h-3z"/></svg>

  <div class="ml-[23px] flex h-full items-center">
    <div class="flex h-full w-14 items-center justify-center"><svg class="h-[28px] w-[30px]" viewBox="0 0 30 28"><defs><linearGradient id="cp1" x1="0" y1="0" x2="0" y2="1"><stop stop-color="#1778e8"/><stop offset=".5" stop-color="#2bb6b0"/><stop offset="1" stop-color="#f3d12a"/></linearGradient><linearGradient id="cp2" x1="1" y1="0" x2="0" y2="1"><stop stop-color="#8a4ff0"/><stop offset=".5" stop-color="#f0588a"/><stop offset="1" stop-color="#fa9a3a"/></linearGradient></defs><path d="M8 .500h10.500c3 0 3.800 3 4.800 7h-5.300c-2 0-3 1-4 3L11 18c-1 2-2 2.500-4 2.500H3c-3 0-3.500-3-2.500-6L4 4c.7-2 2-3.500 4-3.500z" fill="url(#cp1)"/><path d="M22 27.500H11.500c-3 0-3.800-3-4.800-7h5.300c2 0 3-1 4-3l3-7.500c1-2 2-2.500 4-2.500h4c3 0 3.500 3 2.500 6L26 24c-.7 2-2 3.500-4 3.500z" fill="url(#cp2)"/></svg></div>
    <div class="relative flex h-full w-14 items-center justify-center"><svg class="h-[23px] w-7" viewBox="0 0 28 24"><path d="M0 1.500C0 .7.700 0 1.500 0H11l2.500 3H28v20H0z" fill="#e0a106"/><path d="M0 4h13l2-1.500h13v20H0z" fill="#fed266"/><path d="M5 24V14c0-1 .7-1.500 1.500-1.500h15c.8 0 1.500.5 1.500 1.500v10h-4v-6H9v6z" fill="#3a8fd8"/></svg><div class="absolute bottom-0 left-[6px] h-[3px] w-[45px] bg-[#0078d7]"></div></div>
    <div class="relative flex h-full w-14 items-center justify-center"><svg class="h-[30px] w-[30px]" viewBox="0 0 30 30"><defs><linearGradient id="ed" x1="0" y1=".3" x2="1" y2=".3"><stop stop-color="#1a8fdc"/><stop offset=".5" stop-color="#2cbccf"/><stop offset="1" stop-color="#5cd85a"/></linearGradient></defs><circle cx="15" cy="15" r="15" fill="#0f6fc4"/><path d="M0 14C1 6 7 0 15 0c9 0 15 6 15 12.500 0 4.500-3.500 7.500-8 7.500-3 0-5-1-4-2.500 2-2.500 1-7.500-5-8.500C7 8 2 11 0 14z" fill="url(#ed)"/><path d="M9 17c1-4 4-5 5.500-5-3 4 0 10 6 11 3 .6 6 0 8-1-3 5.500-9 8-14 8-5-2-7-7-5.500-13z" fill="#104f96"/><path d="M15 12c3-.5 5 3 3 5.500-1 1.500 1 2.500 4 2.500 3 0 6-1.500 8-4v4l-1.500 2c-9 3-15-3-13.500-10z" fill="#d2d9e2"/></svg><div class="absolute bottom-0 left-[6px] h-[3px] w-[45px] bg-[#0078d7]"></div></div>
    <div class="flex h-full w-14 items-center justify-center"><svg class="h-[30px] w-[30px]" viewBox="0 0 30 30"><path d="M0 0h30v30H0z" fill="#fb443a"/><path d="M12 9l6 6-6 6-6-6z" fill="#fff"/><path d="M16.500 9l6 6-6 6" fill="none" stroke="#fff" stroke-width="2.400"/></svg></div>
    <div class="relative flex h-full w-14 items-center justify-center bg-[#eceff4] pr-[3px]"><svg class="h-[30px] w-[30px]" viewBox="0 0 30 30"><circle cx="15" cy="15" r="15" fill="#fbbc05"/><path d="M2 7.500A15 15 0 0 1 28 7.500L15 8 9 18.500z" fill="#ea4335"/><path d="M2 7.500l6.500 11L15 22l-1.500 8A15 15 0 0 1 2 7.500z" fill="#34a853"/><circle cx="15" cy="15" r="7" fill="#fff"/><circle cx="15" cy="15" r="5.500" fill="#3b7ded"/></svg><div class="absolute right-1 bottom-0 h-full w-px bg-[#b9bfc8]"></div><div class="absolute bottom-0 left-0 h-[3px] w-[51px] bg-[#0078d7]"></div><div class="absolute right-0 bottom-0 h-[3px] w-[5px] bg-[#5ba5e2]"></div></div>
    <div class="flex h-full w-14 items-center justify-center"><div class="flex h-[30px] w-[30px] items-center justify-center rounded-[12px] bg-[#0b5cff] pb-0.5 text-[9px] font-bold text-white">zoom</div></div>
    <div class="flex h-full w-14 items-center justify-center"><svg class="h-[30px] w-[30px]" viewBox="0 0 30 30"><path d="M15 0l7.500 7.500L15 15 7.500 7.500z" fill="#fa8a85"/><path d="M7.500 7.500L15 15l-7.500 7.500L0 15z" fill="#86b5fb"/><path d="M22.500 7.500L30 15l-7.500 7.500L15 15z" fill="#8fd16e"/><path d="M15 15l7.500 7.500L15 30l-7.500-7.500z" fill="#fbe487"/><path d="M12 5l3 3v13M15 14l5 2" fill="none" stroke="#e3e7ee" stroke-width="1.800"/><circle cx="15" cy="12.500" r="2.200" fill="#e3e7ee"/><circle cx="15" cy="21" r="2.200" fill="#e3e7ee"/><circle cx="20.500" cy="16" r="2.200" fill="#e3e7ee"/></svg></div>
    <div class="relative flex h-full w-14 items-center justify-center"><svg class="h-[30px] w-[30px]" viewBox="0 0 30 30"><path d="M22 0v9L4 23c-1 .6-1.500.5-2 0L.6 21.500c-.6-.6-.6-1.400 0-2z" fill="#0d79c2"/><path d="M22 30v-9L4 7c-1-.6-1.500-.5-2 0L.6 8.500c-.6.600-.6 1.400 0 2z" fill="#1282cc"/><path d="M22 0l6.500 2.700c1 .4 1.500 1 1.500 2v20.600c0 1-.5 1.600-1.500 2L22 30z" fill="#28a3ef"/></svg><div class="absolute bottom-0 left-[6px] h-[3px] w-[45px] bg-[#0078d7]"></div></div>
    <div class="flex h-full w-[55px] items-center justify-center pr-[2px]"><svg class="h-[30px] w-[25px]"><use href="#vbox"/></svg></div>
    <div class="flex h-full w-[57px] items-center justify-center pr-[2px]"><svg class="h-[30px] w-[25px]"><use href="#vbox"/></svg></div>
    <div class="relative flex h-full w-[56px] items-center justify-center"><svg class="h-[29px] w-[29px]" viewBox="0 0 29 29"><path d="M0 0h28v21H0z" fill="#333536"/><path d="M3 4l3 2.500L3 9M7 9.500h3" fill="none" stroke="#fff" stroke-width="1.200"/><path d="M8 14l6-4 5 5-4 7z" fill="#e23a36"/><path d="M8 14l7 9 5-5-5-7z" fill="#e84a42"/><path d="M16 12l6-4 7 7-6 5z" fill="#4385f0"/><path d="M14 23l6-6 3 2 5-3 1 4-9 9z" fill="#a4e312"/></svg><div class="absolute bottom-0 left-[6px] h-[3px] w-11 bg-[#0078d7]"></div></div>
    <div class="relative flex h-full w-[55px] items-center justify-center"><svg class="h-[28px] w-[29px]" viewBox="0 0 29 28"><path d="M7 0h11v14H7z" fill="#21a366"/><path d="M18 0h9c1 0 2 .7 2 2v5H18z" fill="#33c481"/><path d="M7 7h11v14H7z" fill="#107c41"/><path d="M18 7h11v7H18z" fill="#21a366"/><path d="M18 14h11v7H18z" fill="#107c41"/><path d="M7 21h22v5c0 1-1 2-2 2H9c-1 0-2-1-2-2z" fill="#185c37"/><rect y="6" width="15" height="16" rx="1.500" fill="#107c41"/><text x="3" y="18.500" font-family="Open Sans" font-weight="bold" font-size="13" fill="#fff">X</text></svg><div class="absolute bottom-0 left-[5px] h-[3px] w-11 bg-[#0078d7]"></div></div>
    <div class="relative flex h-full w-[55px] items-center justify-center"><svg class="h-[28px] w-[28px]" viewBox="0 0 28 28"><path d="M1 2h21l1 25H1z" fill="#f5f7f2" stroke="#8a8f86" stroke-width=".8"/><path d="M2 18l9-3 10 1 1 10H2z" fill="#7ed321"/><path d="M4 13c2-3 6-4 9-2l2-3 3 2-2 3c2 1 1 4-2 4l2 3-4-1-4 2-1-3c-3 0-4-3-3-5z" fill="#8ed63c" stroke="#1f3d0b" stroke-width="1"/><path d="M7 14l5-1M6 17l6 0" stroke="#1f3d0b"/><path d="M3 1v3M6 1v3M9 1v3M12 1v3M15 1v3M18 1v3" stroke="#777"/><path d="M26.500 1l-7.500 17-1 4 3-3L28 2z" fill="#f3b73b" stroke="#7a5b1b" stroke-width=".6"/></svg><div class="absolute bottom-0 left-[5px] h-[3px] w-11 bg-[#0078d7]"></div></div>
    <div class="relative flex h-full w-[55px] items-center justify-center"><svg class="h-[27px] w-[28px]" viewBox="0 0 28 27"><path d="M26 2l2 22-4 1-2-3z" fill="#8a8578"/><path d="M9 1l16 2-2 23-6-2z" fill="#eef2f4" stroke="#9fb0b8" stroke-width=".6"/><path d="M9 1l15 1-7 17L0 17z" fill="#7cc0cf"/><path d="M9 1l15 1-4 8-15-1z" fill="#a9dbe4"/><path d="M9 1.500l15 1" stroke="#666" stroke-dasharray="1.500 1" stroke-width="1.600"/></svg><div class="absolute bottom-0 left-[5px] h-[3px] w-11 bg-[#0078d7]"></div></div>
    <div class="relative flex h-full w-[55px] items-center justify-center"><svg class="h-[28px] w-[28px]"><use href="#telegram"/></svg><div class="absolute right-[1px] bottom-[8px] flex h-[14px] w-[19px] items-center justify-center rounded-[4px] bg-[#ee3b37] text-[11px] text-white">..62</div><div class="absolute bottom-0 left-[5px] h-[3px] w-11 bg-[#0078d7]"></div></div>
    <div class="relative flex h-full w-[55px] items-center justify-center"><svg class="h-[29px] w-[30px]" viewBox="0 0 30 29"><path d="M1 19C0 10 8 4 16 4c7 0 12 4 11 11-1 8-7 13-13 13-4 0-2-5-6-6-3-.5-6 1-7-3z" fill="#b9d8ee" stroke="#7da4c2"/><circle cx="5.500" cy="15" r="2.600" fill="#d94030"/><circle cx="10" cy="9.500" r="2.600" fill="#efb83a"/><circle cx="16.500" cy="8" r="2.600" fill="#5ab84a"/><path d="M25.500 6.500L15.500 28.500l-1-2 8.500-20z" fill="#d98438" stroke="#a8642a" stroke-width=".6"/><path d="M22 2l5-2 2 2-3 6-4-1z" fill="#a87b4f"/></svg><div class="absolute bottom-0 left-[5px] h-[3px] w-11 bg-[#0078d7]"></div></div>
  </div>

  <!-- notification area -->
  <svg class="ml-auto h-[31px] w-[31px]" viewBox="0 0 31 31"><path d="M11 1c0 8 3 12 9 12-4 5-15 6-19 0 5 0 10-4 10-12z" fill="#f4a02c"/><path d="M7 29.500a6.500 6.500 0 0 1 0-12 9 9 0 0 1 16-1.500 7 7 0 0 1 1 13.500z" fill="#b7cffa"/><path d="M3 27c6-3 16-3 26-3-.5 3-2.500 5.500-5 5.500H7C5.500 29.500 4 28.500 3 27z" fill="#86aef3"/><circle cx="23" cy="7.500" r="7.500" fill="#c42b1c"/><path d="M21 5.500L23.500 4v8" stroke="#fff" stroke-width="1.400" fill="none"/></svg>
  <span class="ml-[10px] w-[68px] text-[17.500px] tracking-[-0.3px] whitespace-nowrap">27°C</span>
  <svg class="h-[9px] w-[17px]" viewBox="0 0 17 9"><path d="M.7 8.500l7.800-7.800 7.800 7.800" fill="none" stroke="#000" stroke-width="1.400"/></svg>
  <svg class="ml-[15px] h-[19px] w-[15px]" viewBox="0 0 15 19"><rect x=".7" y="5" width="10" height="9" rx="2" fill="none" stroke="#000" stroke-width="1.300"/><path d="M10.700 8l3.300-2v7l-3.300-2M2 2.500C4 .5 8 .5 10 2.500M2 16.500c2 2 6 2 8 0" fill="none" stroke="#000" stroke-width="1.300"/></svg>
  <svg class="ml-[11px] h-[18px] w-[21px]" viewBox="0 0 21 18"><path d="M4 13a4 4 0 0 1 0-8 6 6 0 0 1 11-1 4.500 4.500 0 0 1 1 9z" fill="#8f8f8f" stroke="#444"/><path d="M4 13c0-5 5-7 9-5" fill="none" stroke="#e6e6e6" stroke-width="2"/><circle cx="14.500" cy="11.500" r="6" fill="#0067c0"/><path d="M14.500 10.500v4.500M14.500 7.700v1.600" stroke="#fff" stroke-width="1.700"/></svg>
  <svg class="ml-[12px] h-[21px] w-[14px]" viewBox="0 0 14 21"><path d="M2.500 0h9v15.500h-9z"/><path d="M.6 9v7.500h12.800V9M7 16.500v3.500M3.500 20.300h7" fill="none" stroke="#000" stroke-width="1.300"/></svg>
  <svg class="ml-[13px] h-[14px] w-[21px]" viewBox="0 0 21 14"><path d="M5 3.500h14v9H5V8M19 6h1.500v4H19M1 3.500h4v3H1zM2 0v3M4 0v3M3 7v6h3" fill="none" stroke="#000" stroke-width="1.200"/><path d="M6.500 5.500h4v5.500h-4z"/></svg>
  <svg class="ml-[12px] h-[17px] w-[17px]" viewBox="0 0 17 17"><path d="M1 16C1 7.500 7.500 1 16 1M5 16C5 10 10 5 16 5M8.500 16c0-4 3.500-7.500 7.500-7.500" fill="none" stroke="#000" stroke-width="1.200"/><circle cx="14" cy="14.500" r="1.800"/></svg>
  <svg class="ml-[11px] h-[16px] w-[21px]" viewBox="0 0 21 16"><path d="M1 5h3l4-4v14l-4-4H1zM10.500 5.500c1.200 1.500 1.200 3.500 0 5M13.500 3.500c2.200 2.500 2.200 6.500 0 9M16.500 1.500c3.300 4 3.300 9 0 13" fill="none" stroke="#000" stroke-width="1.200"/></svg>
  <span class="ml-[12px] w-[29px] text-[14.500px] tracking-[-0.3px]">ENG</span>
  <div class="ml-[15px] flex w-[78px] flex-col items-center text-[14.500px] leading-[24px] whitespace-nowrap"><span class="tracking-[-0.3px]">22:28</span><span>25-11-2024</span></div>
  <svg class="ml-[22px] h-[20px] w-[20px]" viewBox="0 0 20 20"><path d="M.6.600h18.800v15.400h-6L10 19l-3-3H.600z" fill="none" stroke="#000" stroke-width="1.300"/></svg>
  <div class="mr-[5px] ml-[25px] h-full w-px bg-[#9aa3ae]"></div>
</div>
</body>
</html>
